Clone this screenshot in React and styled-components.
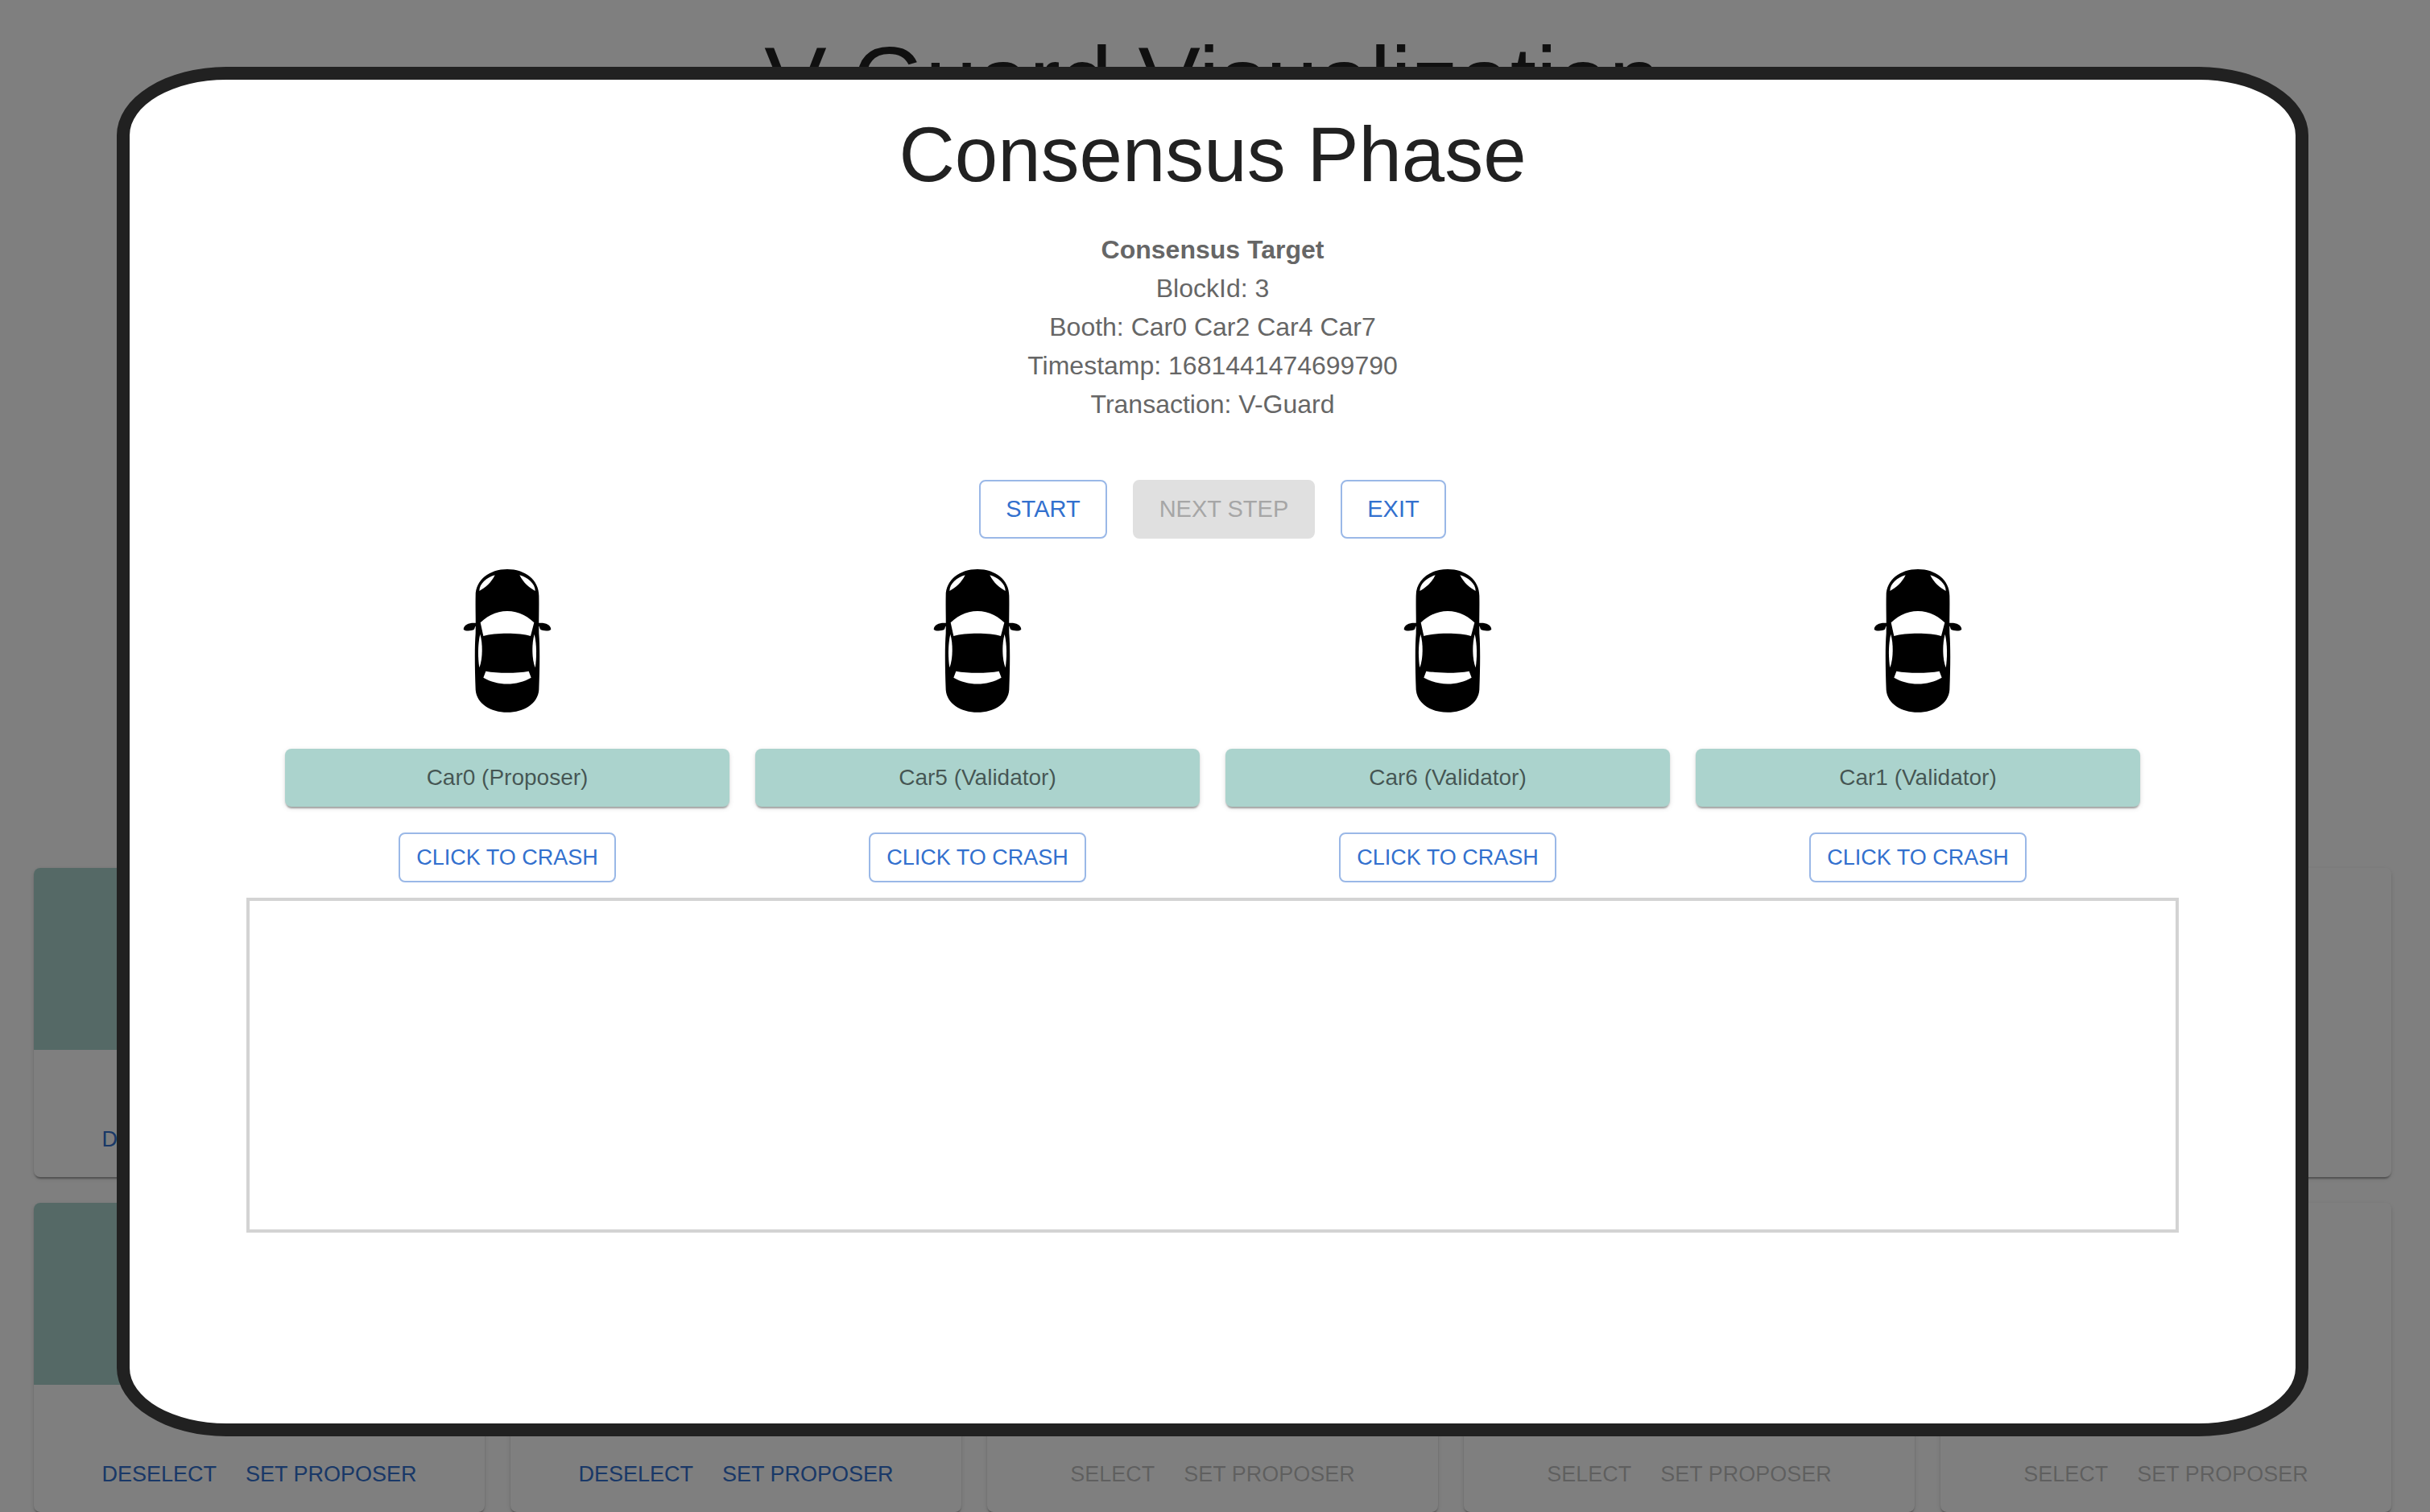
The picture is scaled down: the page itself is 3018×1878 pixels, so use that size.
import React from "react";
import styled, { createGlobalStyle } from "styled-components";

const BLUE = "#3270ce";
const TEAL = "#abd3cd";
const SHADOW =
  "0 4px 2px -2px rgba(0,0,0,0.2), 0 2px 2px 0 rgba(0,0,0,0.14), 0 2px 6px 0 rgba(0,0,0,0.12)";

const GlobalStyle = createGlobalStyle`
  *, *::before, *::after { box-sizing: border-box; }
  html, body { margin: 0; background: #fff; }
  body {
    font-family: "Liberation Sans", Arial, sans-serif;
    color: #212121;
    overflow: hidden;
  }
  h1, h2, h3, p { margin: 0; font-weight: 400; }
  button { font-family: inherit; cursor: pointer; }
  button:disabled { cursor: default; }
`;

const Page = styled.main`
  display: flex;
  flex-direction: column;
  min-height: 100vh;
  padding: 32px 48px 0 42px;
`;

const PageTitle = styled.h1`
  font-size: 116px;
  line-height: 136px;
  text-align: center;
`;

const VehicleGrid = styled.section`
  display: grid;
  grid-template-columns: repeat(5, 1fr);
  gap: 32px;
  margin-top: auto;
`;

const VehicleCard = styled.article`
  display: flex;
  flex-direction: column;
  justify-content: space-between;
  height: 384px;
  border-radius: 8px;
  overflow: hidden;
  background: #fff;
  box-shadow: ${SHADOW};
`;

const CardBanner = styled.div`
  height: 226px;
  background: ${(p) => (p.$selected ? TEAL : "#fff")};
`;

const CardActions = styled.div`
  display: flex;
  justify-content: center;
  gap: 16px;
  padding: 16px;
`;

const TextButton = styled.button`
  padding: 8px 10px;
  border: 0;
  border-radius: 8px;
  background: transparent;
  color: ${BLUE};
  font-size: 27px;
  line-height: 46px;
  text-transform: uppercase;

  &:disabled {
    color: rgba(0, 0, 0, 0.26);
  }
`;

const Backdrop = styled.div`
  position: fixed;
  inset: 0;
  display: flex;
  padding: 83px 151px 94px 145px;
  background: rgba(0, 0, 0, 0.5);
`;

const Dialog = styled.section`
  flex: 1;
  padding: 37px 48px;
  border: 16px solid #212121;
  border-radius: 5%;
  background: #fff;
`;

const DialogBody = styled.div`
  display: flex;
  flex-direction: column;
  max-width: 2400px;
  margin: 0 auto;
`;

const DialogTitle = styled.h2`
  font-size: 96px;
  line-height: 112px;
  text-align: center;
`;

const Target = styled.div`
  margin-top: 38px;
  color: #666;
  font-size: 32px;
  line-height: 48px;
  text-align: center;
`;

const TargetTitle = styled.h3`
  font-size: 32px;
  font-weight: 700;
`;

const Controls = styled.div`
  display: flex;
  justify-content: center;
  gap: 32px;
  margin-top: 70px;
`;

const OutlinedButton = styled.button`
  padding: ${(p) => (p.$small ? "6px 20px" : "10px 31px")};
  border: 2px solid #9ab8e7;
  border-radius: 8px;
  background: #fff;
  color: ${BLUE};
  font-size: ${(p) => (p.$small ? "27px" : "29px")};
  line-height: ${(p) => (p.$small ? "46px" : "49px")};
  text-transform: uppercase;

  &:disabled {
    border-color: #e0e0e0;
    background: #e0e0e0;
    color: #a6a6a6;
  }
`;

const Fleet = styled.div`
  display: grid;
  grid-template-columns: repeat(4, 1fr);
  gap: 32px;
  margin-top: 21px;
  padding: 0 48px;
`;

const FleetMember = styled.div`
  display: flex;
  flex-direction: column;
  align-items: center;
  gap: 32px;
`;

const CarDrawing = styled.svg`
  display: block;
  width: 140px;
  height: 208px;
`;

const RoleLabel = styled.p`
  align-self: stretch;
  padding: 16px;
  border-radius: 8px;
  background: ${TEAL};
  box-shadow: ${SHADOW};
  color: rgba(0, 0, 0, 0.6);
  font-size: 28px;
  line-height: 40px;
  text-align: center;
`;

const MessageLog = styled.div`
  height: 416px;
  margin-top: 19px;
  border: 4px solid #d3d3d3;
`;

function CarSide() {
  return (
    <>
      <path
        fill="#fff"
        d="M164 73C134 82 106 104 106 132C128 120 150 102 164 73Z"
      />
      <path
        fill="#fff"
        d="M109 293C119 328 119 384 106 418C100 380 100 330 109 293Z"
      />
      <path d="M96 252C72 249 48 256 47 275C52 283 79 281 86 276C90 271 88 264 96 261Z" />
    </>
  );
}

function Car() {
  return (
    <CarDrawing viewBox="0 0 420 624" aria-hidden="true">
      <path d="M92 150C92 90 144 51 210 51C276 51 328 90 328 150C329 200 327 230 328 290C332 340 331 420 328 500C324 552 272 584 210 584C148 584 96 552 92 500C89 420 88 340 92 290C93 230 91 200 92 150Z" />
      <path
        fill="#fff"
        d="M110 250C140 221 175 207 210 207C245 207 280 221 310 250L297 300C255 287 165 287 121 300Z"
      />
      <path
        fill="#fff"
        d="M130 431C175 439 245 439 290 431L299 455C245 486 175 486 121 455Z"
      />
      <CarSide />
      <g transform="translate(420 0) scale(-1 1)">
        <CarSide />
      </g>
    </CarDrawing>
  );
}

const vehicles = [
  { id: 0, selected: true },
  { id: 1, selected: true },
  { id: 2, selected: true },
  { id: 3, selected: false },
  { id: 4, selected: false },
  { id: 5, selected: true },
  { id: 6, selected: true },
  { id: 7, selected: false },
  { id: 8, selected: false },
  { id: 9, selected: false },
];

const fleet = [
  "Car0 (Proposer)",
  "Car5 (Validator)",
  "Car6 (Validator)",
  "Car1 (Validator)",
];

export default function App() {
  return (
    <>
      <GlobalStyle />
      <Page>
        <PageTitle>V-Guard Visualization</PageTitle>
        <VehicleGrid>
          {vehicles.map(({ id, selected }) => (
            <VehicleCard key={id}>
              <CardBanner $selected={selected} />
              <CardActions>
                <TextButton type="button" disabled={!selected}>
                  {selected ? "Deselect" : "Select"}
                </TextButton>
                <TextButton type="button" disabled={!selected}>
                  Set proposer
                </TextButton>
              </CardActions>
            </VehicleCard>
          ))}
        </VehicleGrid>
      </Page>
      <Backdrop>
        <Dialog role="dialog" aria-modal="true" aria-labelledby="phase-title">
          <DialogBody>
            <DialogTitle id="phase-title">Consensus Phase</DialogTitle>
            <Target>
              <TargetTitle>Consensus Target</TargetTitle>
              <p>BlockId: 3</p>
              <p>Booth: Car0 Car2 Car4 Car7</p>
              <p>Timestamp: 1681441474699790</p>
              <p>Transaction: V-Guard</p>
            </Target>
            <Controls>
              <OutlinedButton type="button">Start</OutlinedButton>
              <OutlinedButton type="button" disabled>
                Next step
              </OutlinedButton>
              <OutlinedButton type="button">Exit</OutlinedButton>
            </Controls>
            <Fleet>
              {fleet.map((role) => (
                <FleetMember key={role}>
                  <Car />
                  <RoleLabel>{role}</RoleLabel>
                  <OutlinedButton type="button" $small>
                    Click to crash
                  </OutlinedButton>
                </FleetMember>
              ))}
            </Fleet>
            <MessageLog />
          </DialogBody>
        </Dialog>
      </Backdrop>
    </>
  );
}
